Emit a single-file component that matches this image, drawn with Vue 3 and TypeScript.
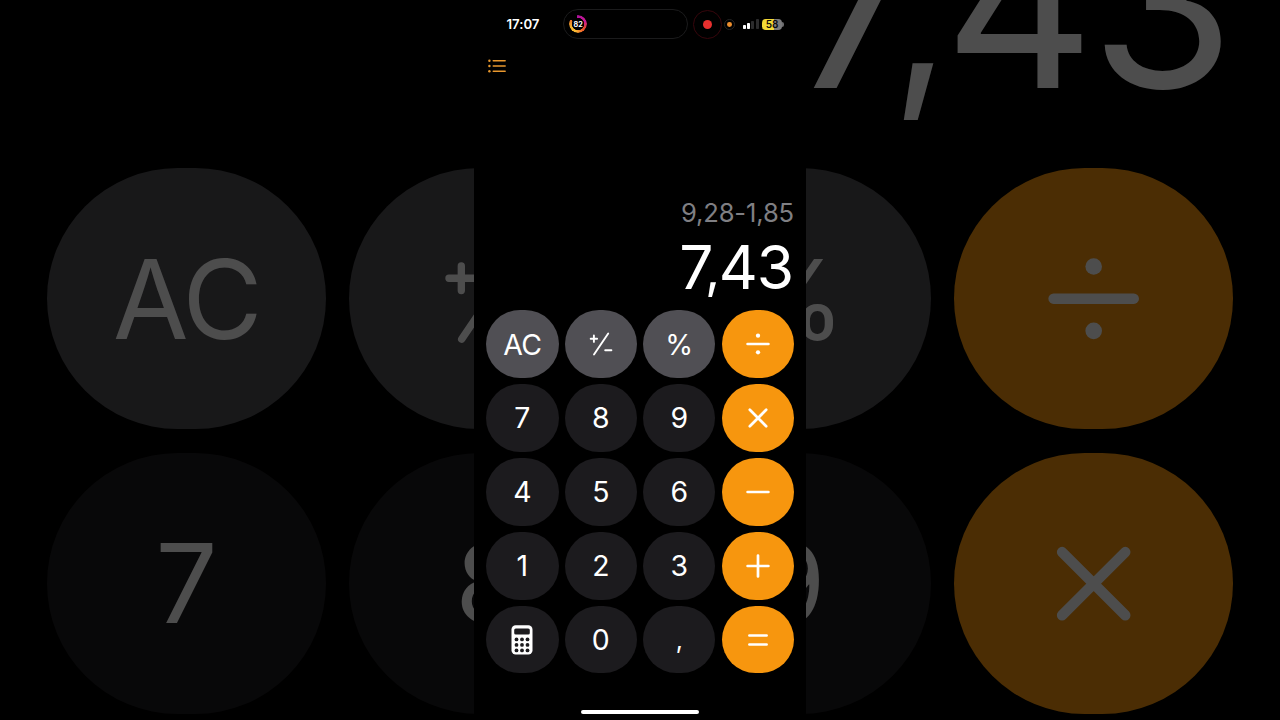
<script setup lang="ts">
type Tone = 'function' | 'digit' | 'operator'

interface Key {
  id: string
  tone: Tone
  label?: string
}

const layers = ['backdrop', 'front'] as const

const keys: Key[] = [
  { id: 'clear', tone: 'function', label: 'AC' },
  { id: 'sign', tone: 'function' },
  { id: 'percent', tone: 'function', label: '%' },
  { id: 'divide', tone: 'operator' },
  { id: 'seven', tone: 'digit', label: '7' },
  { id: 'eight', tone: 'digit', label: '8' },
  { id: 'nine', tone: 'digit', label: '9' },
  { id: 'multiply', tone: 'operator' },
  { id: 'four', tone: 'digit', label: '4' },
  { id: 'five', tone: 'digit', label: '5' },
  { id: 'six', tone: 'digit', label: '6' },
  { id: 'minus', tone: 'operator' },
  { id: 'one', tone: 'digit', label: '1' },
  { id: 'two', tone: 'digit', label: '2' },
  { id: 'three', tone: 'digit', label: '3' },
  { id: 'plus', tone: 'operator' },
  { id: 'mode', tone: 'digit' },
  { id: 'zero', tone: 'digit', label: '0' },
  { id: 'comma', tone: 'digit', label: ',' },
  { id: 'equals', tone: 'operator' },
]

// Stroked symbols, drawn around the centre of the key
const strokes: Record<string, string> = {
  divide: 'M-10.4 0H10.4',
  multiply: 'M-8.2 -8.2L8.2 8.2M8.2 -8.2L-8.2 8.2',
  minus: 'M-10.4 0H10.4',
  plus: 'M-10.4 0H10.4M0 -10.4V10.4',
  equals: 'M-8.6 -4.5H8.6M-8.6 4.5H8.6',
  sign: 'M-7.1 -8.5V-2.1M-10.3 -5.3H-3.9M-7 10.5L7.2 -10.5M4.2 6.2H10.4',
}

const dots = [-5.5, 0, 5.5]
</script>

<template>
  <div class="stage">
    <div v-for="layer in layers" :key="layer" class="screen" :class="layer">
      <header class="status">
        <span class="time">17:07</span>
        <div class="island">
          <div class="timer"><span class="timer-value">82</span></div>
        </div>
        <div class="record"><i class="record-dot"></i></div>
        <div class="mic"><i class="mic-dot"></i></div>
        <div class="signal"><i></i><i></i><i></i><i></i></div>
        <div class="battery"><span>58</span></div>
        <i class="battery-tip"></i>
      </header>

      <nav class="toolbar">
        <svg class="list" width="20" height="16" viewBox="0 0 20 16">
          <path d="M6.2 2.8H18.2M6.2 8H18.2M6.2 13.2H18.2" />
          <circle cx="2.4" cy="2.8" r="1.2" />
          <circle cx="2.4" cy="8" r="1.2" />
          <circle cx="2.4" cy="13.2" r="1.2" />
        </svg>
      </nav>

      <section class="display">
        <div class="expression">9,28-1,85</div>
        <div class="result">7<span class="separator">,</span>43</div>
      </section>

      <main class="keypad">
        <button v-for="key in keys" :key="key.id" type="button" class="key" :class="[key.tone, key.id]">
          <span v-if="key.label" class="label">{{ key.label }}</span>
          <svg v-else-if="key.id === 'mode'" class="glyph" width="32" height="32" viewBox="-16 -16 32 32">
            <rect class="solid" x="-10.5" y="-14.7" width="21" height="29.3" rx="4.2" />
            <rect class="hole" x="-7.8" y="-11.6" width="15.6" height="6.2" rx="1.6" />
            <template v-for="y in dots" :key="y">
              <circle v-for="x in dots" :key="x" class="hole" :cx="x" :cy="y + 4.9" r="1.9" />
            </template>
          </svg>
          <svg v-else class="glyph" width="32" height="32" viewBox="-16 -16 32 32">
            <path class="stroke" :d="strokes[key.id]" />
            <template v-if="key.id === 'divide'">
              <circle class="solid" cx="0" cy="-8.35" r="2.15" />
              <circle class="solid" cx="0" cy="8.35" r="2.15" />
            </template>
          </svg>
        </button>
      </main>

      <div class="home"></div>
    </div>
  </div>
</template>

<style>
body {
  margin: 0;
  background: #000;
}
</style>

<style scoped>
.stage {
  position: relative;
  width: 1280px;
  height: 720px;
  overflow: hidden;
  background: #000;
  font-family: Inter, 'Liberation Sans', sans-serif;
}

.screen {
  position: absolute;
  left: 474px;
  top: 0;
  display: flex;
  flex-direction: column;
  width: 332px;
  height: 720px;
  overflow: hidden;
  background: #000;
  color: #fff;
}

.backdrop {
  left: 0;
  top: -266.7px;
  zoom: 3.8554;
  opacity: 0.3;
}

.status {
  display: flex;
  align-items: center;
  flex: none;
  box-sizing: border-box;
  height: 48.6px;
}

.time {
  width: 56px;
  margin-left: 32.6px;
  font-size: 13.2px;
  font-weight: 600;
  letter-spacing: -0.05px;
}

.island {
  display: flex;
  align-items: center;
  box-sizing: border-box;
  width: 125.6px;
  height: 30px;
  padding-left: 5.6px;
  border: 1px solid #1b1b1c;
  border-radius: 15px;
}

.timer {
  position: relative;
  display: grid;
  place-items: center;
  width: 18px;
  height: 18px;
}

.timer::before {
  content: '';
  position: absolute;
  inset: 0;
  border-radius: 50%;
  background: conic-gradient(#b0129c 0deg, #cc1a94 70deg, #e2452f 120deg, #f4722a 155deg, #fbbd35 200deg, #f5b52e 245deg, #e8732a 300deg, #000 301deg, #000 352deg, #b0129c 353deg);
  mask: radial-gradient(circle, transparent 5.9px, #000 6.5px);
}

.timer-value {
  font-size: 7.2px;
  font-weight: 700;
  line-height: 1;
}

.record {
  display: grid;
  place-items: center;
  box-sizing: border-box;
  width: 29.6px;
  height: 29.6px;
  margin-left: 4.4px;
  border: 1px solid #37060c;
  border-radius: 50%;
}

.record-dot {
  width: 9.4px;
  height: 9.4px;
  border-radius: 50%;
  background: #e8302f;
}

.mic {
  display: grid;
  place-items: center;
  box-sizing: border-box;
  width: 11px;
  height: 11px;
  margin-left: 1.8px;
  border: 1px solid #242424;
  border-radius: 50%;
}

.mic-dot {
  width: 4.8px;
  height: 4.8px;
  border-radius: 50%;
  background: #ee8f2e;
}

.signal {
  display: flex;
  align-items: flex-end;
  gap: 1.4px;
  height: 10px;
  margin-left: 7.6px;
}

.signal i {
  width: 3px;
  height: 4px;
  border-radius: 0.8px;
  background: #fff;
}

.signal i:nth-child(2) {
  height: 6px;
}

.signal i:nth-child(3) {
  height: 8.2px;
  background: #2b2b2c;
}

.signal i:nth-child(4) {
  height: 10px;
  background: #2b2b2c;
}

.battery {
  display: grid;
  place-items: center;
  width: 20px;
  height: 11.6px;
  margin-left: 3.4px;
  border-radius: 3.8px;
  background: linear-gradient(90deg, #f3d936 58%, #7a7a7c 58%);
  color: #0c0c0c;
  font-size: 10px;
  font-weight: 600;
  line-height: 11.6px;
}

.battery-tip {
  width: 2px;
  height: 5px;
  margin-left: 0.2px;
  border-radius: 0 2px 2px 0;
  background: #6c6c6e;
}

.toolbar {
  flex: none;
  box-sizing: border-box;
  height: 59.9px;
  padding: 9.7px 0 0 13px;
}

.list {
  display: block;
}

.list path {
  fill: none;
  stroke: #e9982e;
  stroke-width: 1.4;
  stroke-linecap: round;
}

.list circle {
  fill: #e9982e;
}

.display {
  display: flex;
  flex-direction: column;
  align-items: flex-end;
  flex: none;
  box-sizing: border-box;
  height: 201.8px;
  padding: 89.4px 12px 0 0;
}

.expression {
  color: #7f7f83;
  font-size: 25.6px;
  line-height: 30px;
  letter-spacing: -0.15px;
}

.result {
  margin: 5.5px 0.9px 0 0;
  font-size: 60.5px;
  line-height: 68px;
  letter-spacing: -1.1px;
}

.separator {
  margin: 0 -0.5px 0 -7.2px;
  font-size: 0.88em;
  line-height: 0;
  vertical-align: 1px;
}

.keypad {
  display: grid;
  grid-template-columns: repeat(4, 72.4px);
  grid-auto-rows: 67.8px;
  gap: 6.05px;
  flex: none;
  margin: 0 0 0 12.2px;
}

.key {
  display: grid;
  place-items: center;
  margin: 0;
  padding: 0;
  border: 0;
  border-radius: 34px;
  color: #fff;
  font-family: inherit;
  font-size: 28.4px;
  line-height: 1;
}

.label {
  display: block;
  padding-top: 0.9px;
}

.backdrop .label {
  padding-top: 0.3px;
}

.front .function .label {
  padding-top: 2px;
}

.function {
  background: #504f54;
}

.digit {
  background: #1c1b1e;
}

.operator {
  background: #f7960e;
}

.clear .label {
  letter-spacing: -0.6px;
}

.comma .label {
  font-size: 25px;
}

.glyph {
  display: block;
}

.stroke {
  fill: none;
  stroke: #fff;
  stroke-width: 2.7;
  stroke-linecap: round;
}

.sign .stroke {
  stroke-width: 1.9;
}

.solid {
  fill: #fff;
}

.hole {
  fill: #1c1b1e;
}

.home {
  flex: none;
  width: 118.6px;
  height: 4px;
  margin: 36.5px 0 0 106.9px;
  border-radius: 2px;
  background: #fff;
}
</style>
